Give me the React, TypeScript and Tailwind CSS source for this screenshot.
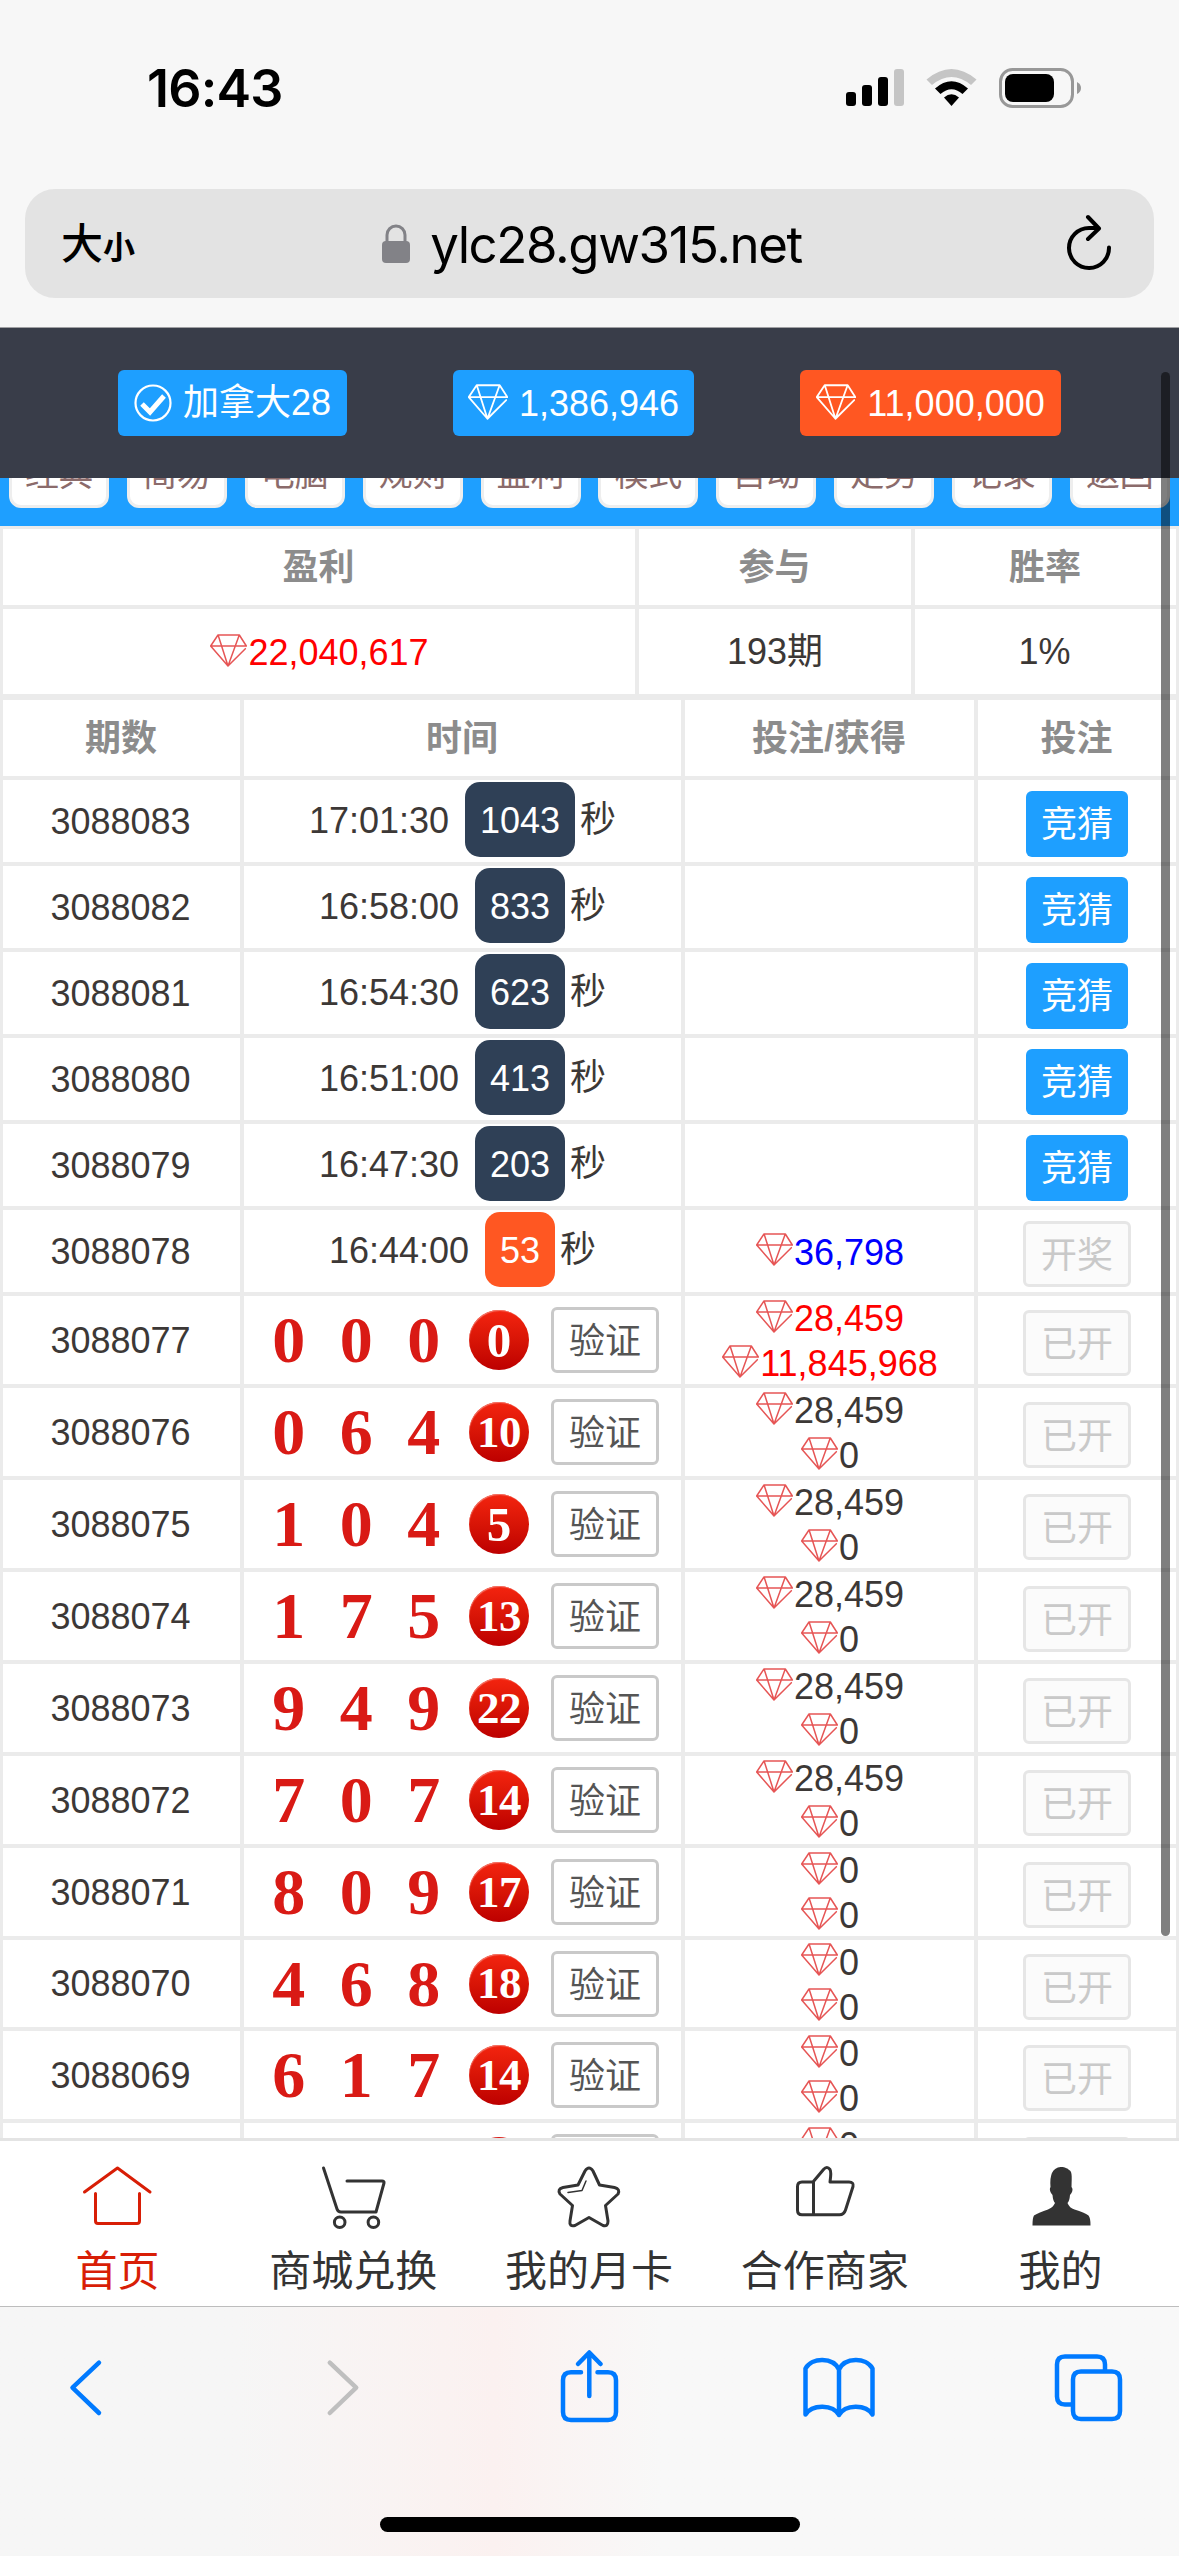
import { clsx } from "clsx";
import type { ReactNode } from "react";

const menu = ["经典", "简易", "电脑", "规则", "盈利", "模式", "自动", "走势", "记录", "返回"];

const upcoming = [
  { id: "3088083", time: "17:01:30", left: "1043" },
  { id: "3088082", time: "16:58:00", left: "833" },
  { id: "3088081", time: "16:54:30", left: "623" },
  { id: "3088080", time: "16:51:00", left: "413" },
  { id: "3088079", time: "16:47:30", left: "203" },
];

const results = [
  { id: "3088077", nums: [0, 0, 0], bet: "28,459", win: "11,845,968" },
  { id: "3088076", nums: [0, 6, 4], bet: "28,459", win: "0" },
  { id: "3088075", nums: [1, 0, 4], bet: "28,459", win: "0" },
  { id: "3088074", nums: [1, 7, 5], bet: "28,459", win: "0" },
  { id: "3088073", nums: [9, 4, 9], bet: "28,459", win: "0" },
  { id: "3088072", nums: [7, 0, 7], bet: "28,459", win: "0" },
  { id: "3088071", nums: [8, 0, 9], bet: "0", win: "0" },
  { id: "3088070", nums: [4, 6, 8], bet: "0", win: "0" },
  { id: "3088069", nums: [6, 1, 7], bet: "0", win: "0" },
];

function Diamond({ className, stroke = 4.5 }: { className: string; stroke?: number }) {
  return (
    <svg viewBox="0 0 111 97" className={className} fill="none" stroke="currentColor" strokeWidth={stroke} strokeLinejoin="round" strokeLinecap="round">
      <path d="M106 43 54 95 2 35 24 2h64l21 33H2M25 4l29 91L87 4" />
    </svg>
  );
}

function Cell({ children, className }: { children?: ReactNode; className?: string }) {
  return <div className={clsx("flex items-center justify-center bg-white", className)}>{children}</div>;
}

function Amount({ value, color }: { value: string; color?: string }) {
  return (
    <div className={clsx("flex items-center pl-px", color)}>
      <Diamond className="-mt-[3px] h-[33px] w-[37px] text-[#e65555]" />
      <span className="pl-px pt-[2px] leading-[43px]">{value}</span>
    </div>
  );
}

function Countdown({ time, left, badge }: { time: string; left: string; badge: string }) {
  return (
    <Cell className="items-start pt-[2px]">
      <div className="flex h-[75px] items-center">
        <span className="pt-[2px]">{time}</span>
        <span className={clsx("ml-[16px] mr-[5px] h-[75px] rounded-[15px] px-[15px] pt-px leading-[75px] text-white", badge)}>{left}</span>
        秒
      </div>
    </Cell>
  );
}

function DisabledButton({ label }: { label: string }) {
  return (
    <span className="mt-[6px] h-[66px] w-[108px] rounded-[6px] border-[3px] border-[#e6e6e6] bg-[#fbfbfb] text-center leading-[63px] text-[#c9c9c9]">
      {label}
    </span>
  );
}

function Ball({ value }: { value: number }) {
  return (
    <span
      className={clsx(
        "ml-[11.5px] flex h-[60px] w-[60px] items-center justify-center rounded-full bg-linear-to-b from-[#f4240f] to-[#bd0000] font-['Liberation_Serif'] font-bold leading-none text-white shadow-[inset_1px_2px_1px_-1px_#f4796b]",
        value > 9 ? "text-[45px] tracking-[-0.5px]" : "text-[49px]"
      )}
    >
      {value}
    </span>
  );
}

function StatusBar() {
  return (
    <div className="flex h-[176px] items-center justify-between pl-[147px] pr-[97px]">
      <span className="pt-px font-['Inter'] text-[52px] font-semibold leading-none tracking-[-0.8px]">16:43</span>
      <svg viewBox="0 0 236 40" className="h-[40px] w-[236px]">
        <rect x="0" y="24" width="10" height="14" rx="3" />
        <rect x="16" y="17" width="10" height="21" rx="3" />
        <rect x="32" y="9" width="10" height="29" rx="3" />
        <rect x="48" y="1" width="10" height="37" rx="3" fill="#c5c5c5" />
        <path d="M80.500 11.500q25-21 50 0l-5.500 5.500q-19.500-16-39 0Z" fill="#c5c5c5" />
        <path d="M89 20.500q16.500-14.500 33 0l-5.500 5.500q-11-9.500-22 0Z" />
        <path d="M98 29.500q7.500-6.500 15 0L105.500 38Z" />
        <rect x="154.500" y="1.500" width="72" height="37" rx="12" fill="none" stroke="#989898" strokeWidth="3" />
        <rect x="159" y="6" width="49" height="28" rx="8" />
        <path d="M231 14q4 2 4 6t-4 6Z" fill="#989898" />
      </svg>
    </div>
  );
}

function AddressBar() {
  return (
    <div className="mx-[25px] mt-[13px] flex h-[109px] items-center justify-between rounded-[30px] bg-[#e3e3e3] pl-[36px] pr-[40px]">
      <div className="flex w-[80px] items-baseline pt-[2px] leading-none">
        <span className="text-[42px] font-medium">大</span>
        <span className="text-[32px] font-bold">小</span>
      </div>
      <div className="flex items-center gap-[20px] pr-[19px]">
        <svg viewBox="0 0 28 40" className="h-[40px] w-[28px] text-[#828287]">
          <rect x="0" y="17" width="28" height="22" rx="4" fill="currentColor" />
          <path d="M5 19V11a9 9 0 0 1 18 0v8" fill="none" stroke="currentColor" strokeWidth="3" />
        </svg>
        <span className="pt-px font-['Inter'] text-[51px] leading-none tracking-[-1.4px]">ylc28.gw315.net</span>
      </div>
      <svg viewBox="0 0 52 60" className="h-[60px] w-[52px]" fill="none" stroke="#000" strokeWidth="4" strokeLinecap="round" strokeLinejoin="round">
        <path d="M47 33.500a20 20 0 1 1-20-19.500H36M26 3l11 11.500L26 25" />
      </svg>
    </div>
  );
}

const tabs: { label: string; icon: ReactNode }[] = [
  {
    label: "首页",
    icon: <path d="M2.500 32 35.500 8 68 32M13.500 33.500V61q0 2.500 2.500 2.500H55q2.500 0 2.500-2.500V33.500" />,
  },
  {
    label: "商城兑换",
    icon: (
      <>
        <path d="M5.500 8 19 49q1 3 4 3h35l8-29q.5-2-2-2H29" />
        <circle cx="21.700" cy="62.300" r="5.300" />
        <circle cx="55.400" cy="62.300" r="5.300" />
      </>
    ),
  },
  {
    label: "我的月卡",
    icon: (
      <>
        <path d="M32 11q4-6 8 0l6.500 14 15 2.500q6 1.500 3.500 6.500L52.500 45.500 55 61q0 6-5 4.500l-14-8-14 8q-6 1.500-5-4.500l2.500-15.500L7 34q-3-5 3-6.500L25 25Z" />
        <path d="m33 21-4 9.500-14 2" strokeWidth="1.500" />
      </>
    ),
  },
  {
    label: "合作商家",
    icon: (
      <path d="M24 22 34.500 9.500q3.500-4 6.500 0 1.500 2.500 0 12.500h19q5 0 4 4.500L56.500 50q-1.500 4.700-6 4.700H13q-4.500 0-4.500-4.500V26.500q0-4.500 4.500-4.500H24M24.500 22v32" />
    ),
  },
  {
    label: "我的",
    icon: (
      <path
        d="M35.500 7C41 7 43 9 44 10c3 1 3 5 2.500 17q2 2 0 6l-1.500 2q-.5 6-2.500 8 2 5 7 6.500 10 3 14 6 2 2 2 10H7.500q0-8 1.500-10 5-3 14-6 5-2 7-6.500-2-2-2.500-8l-1.500-2q-2-4-.5-6Q24 8 35.500 7Z"
        fill="currentColor"
        stroke="none"
      />
    ),
  },
];

function TabBar() {
  return (
    <nav className="grid h-[168px] shrink-0 grid-cols-5 border-t-[3px] border-[#e4e4e4] bg-white pt-[19px] text-[#333]">
      {tabs.map((tab, i) => (
        <div key={tab.label} className={clsx("flex flex-col items-center", i === 0 && "text-[#d81e06]")}>
          <svg viewBox="0 0 72 72" className="h-[72px] w-[72px]" fill="none" stroke="currentColor" strokeWidth="3" strokeLinecap="round" strokeLinejoin="round">
            {tab.icon}
          </svg>
          <span className="mt-[16px] pr-px text-[42px] leading-[48px]">{tab.label}</span>
        </div>
      ))}
    </nav>
  );
}

const toolbar = [
  { name: "back", d: "M55 16.700 28.500 41.700 55 67", color: "text-[#007aff]" },
  { name: "forward", d: "M34.800 16.700 61.200 41.700 34.800 67", color: "text-[#bfbfbf]" },
  { name: "share", d: "M35 26.300H25q-8 0-8 8V66q0 8 8 8h37q8 0 8-8V34.300q0-8-8-8H51.500M43.300 50V7M32 18 43.300 6.500 54.600 18", color: "text-[#007aff]" },
  { name: "bookmarks", d: "M43 23.500C37 11 16 11 9.500 22.500v46C16 58 37 58 43 69 49 58 70 58 76.500 68.500v-46C70 11 49 11 43 23.500V69", color: "text-[#007aff]" },
  { name: "pages", d: "M23.500 58.500H18q-8 0-8-8v-32q0-8 8-8h32q8 0 8 8v6M34 25.500h31q8 0 8 8V65q0 8-8 8H34q-8 0-8-8V33.500q0-8 8-8", color: "text-[#007aff]" },
];

function BrowserToolbar() {
  return (
    <div className="flex h-[250px] shrink-0 flex-col items-center justify-between border-t border-[#bdbdbd] bg-linear-to-r from-[#f6f6f6] from-20% via-[#fbf1f0] via-42% to-[#f8f8f8] to-56% pb-[24px] pt-[39px]">
      <div className="flex w-full justify-between pl-[44px] pr-[48px]">
        {toolbar.map((item) => (
          <svg key={item.name} viewBox="0 0 84 84" className={clsx("h-[84px] w-[84px]", item.color)} fill="none" stroke="currentColor" strokeWidth="4.500" strokeLinecap="round" strokeLinejoin="round">
            <path d={item.d} />
          </svg>
        ))}
      </div>
      <div className="h-[15px] w-[420px] rounded-full bg-black" />
    </div>
  );
}

export default function App() {
  return (
    <div className="relative flex h-[2556px] w-[1179px] flex-col overflow-hidden bg-[#f7f7f7] font-['Liberation_Sans','Noto_Sans_CJK_SC',sans-serif] text-[36px] text-[#3c3836]">
      <div className="h-[327px] shrink-0 text-black">
        <StatusBar />
        <AddressBar />
      </div>

      <header className="flex h-[151px] shrink-0 items-center justify-center gap-[106px] border-t border-[#a0a0a3] bg-[#393d49] text-white">
        <div className="flex h-[66px] w-[229px] items-center justify-center gap-[11px] rounded-[6px] bg-[#1e9fff]">
          <svg viewBox="0 0 38 38" className="h-[38px] w-[38px]" fill="none" stroke="currentColor">
            <circle cx="19" cy="19" r="17.500" strokeWidth="2.200" />
            <path d="m8 20 8 8L30 12" strokeWidth="5" />
          </svg>
          加拿大28
        </div>
        <div className="flex h-[66px] w-[241px] items-center justify-center gap-[11px] rounded-[6px] bg-[#1e9fff]">
          <Diamond className="-mt-[3px] h-[36px] w-[40px]" stroke={5} />
          <span className="pt-px">1,386,946</span>
        </div>
        <div className="flex h-[66px] w-[261px] items-center justify-center gap-[11px] rounded-[6px] bg-[#ff5722]">
          <Diamond className="-mt-[3px] h-[36px] w-[40px]" stroke={5} />
          <span className="pt-px">11,000,000</span>
        </div>
      </header>

      <main className="min-h-0 flex-1 overflow-hidden bg-[#ebebeb]">
        <div className="flex h-[48px] items-end justify-between overflow-hidden bg-[#1e9fff] px-[9px] pb-[18px]">
          {menu.map((item) => (
            <span key={item} className="h-[66px] w-[100px] rounded-[12px] border-[3px] border-[#eee] bg-white text-center text-[34px] leading-[59px] text-[#8b6b6b]">
              {item}
            </span>
          ))}
        </div>

        <div className="grid grid-cols-[632px_272px_261px] grid-rows-[76px_85px] gap-1 px-[3px] pt-[3px]">
          {["盈利", "参与", "胜率"].map((title) => (
            <Cell key={title} className="pr-px pt-[2px] font-bold text-[#8c8c8c]">{title}</Cell>
          ))}
          <Cell><Amount value="22,040,617" color="text-[#f00]" /></Cell>
          <Cell className="pt-px">193期</Cell>
          <Cell className="pr-[2px] pt-px">1%</Cell>
        </div>

        <div className="grid auto-rows-[88px] grid-cols-[237px_437px_289px_198px] grid-rows-[76px_repeat(6,82px)_repeat(7,88px)_87px] gap-1 px-[3px] pt-[6px]">
          {["期数", "时间", "投注/获得", "投注"].map((title, i) => (
            <Cell key={i} className="pr-px pt-[2px] font-bold text-[#8c8c8c]">{title}</Cell>
          ))}

          {upcoming.map((row) => (
            <div key={row.id} className="contents">
              <Cell className="pr-[2px] pt-px">{row.id}</Cell>
              <Countdown time={row.time} left={row.left} badge="bg-[#2f4056]" />
              <Cell />
              <Cell>
                <span className="mt-[6px] h-[66px] w-[102px] rounded-[6px] bg-[#1e9fff] text-center leading-[67px] text-white">竞猜</span>
              </Cell>
            </div>
          ))}

          <Cell className="pr-[2px] pt-px">3088078</Cell>
          <Countdown time="16:44:00" left="53" badge="bg-[#ff5722]" />
          <Cell><Amount value="36,798" color="text-[#00f]" /></Cell>
          <Cell><DisabledButton label="开奖" /></Cell>

          {results.map((row) => {
            const color = row.win === "0" ? undefined : "text-[#f00]";
            return (
              <div key={row.id} className="contents">
                <Cell className="pr-[2px] pt-px">{row.id}</Cell>
                <Cell className="justify-start! pl-[11px]">
                  {row.nums.map((n, i) => (
                    <span key={i} className="w-[67.5px] text-center font-['Liberation_Serif'] text-[66px] font-bold leading-[66px] text-[#d91a15]">{n}</span>
                  ))}
                  <Ball value={row.nums[0] + row.nums[1] + row.nums[2]} />
                  <span className="ml-[22px] h-[66px] w-[108px] rounded-[6px] border-[3px] border-[#c9c9c9] text-center leading-[64px] text-[#555]">验证</span>
                </Cell>
                <Cell className="flex-col">
                  <Amount value={row.bet} color={color} />
                  <Amount value={row.win} color={color} />
                </Cell>
                <Cell><DisabledButton label="已开" /></Cell>
              </div>
            );
          })}

          {/* next row, only its first pixels show above the tab bar */}
          <Cell />
          <Cell className="justify-start! pl-[11px]">
            <span className="ml-[214px] h-[60px] w-[60px] rounded-full bg-linear-to-b from-[#d91a15] to-[#bd0000]" />
            <span className="ml-[22px] h-[66px] w-[108px] rounded-[6px] border-[3px] border-[#c9c9c9]" />
          </Cell>
          <Cell className="flex-col">
            <Amount value="0" />
            <Amount value="0" />
          </Cell>
          <Cell><DisabledButton label="" /></Cell>
        </div>
      </main>

      <TabBar />
      <BrowserToolbar />

      {/* page scroll thumb */}
      <div className="absolute right-[9px] top-[372px] h-[1564px] w-[9px] rounded-full bg-black/50" />
    </div>
  );
}
